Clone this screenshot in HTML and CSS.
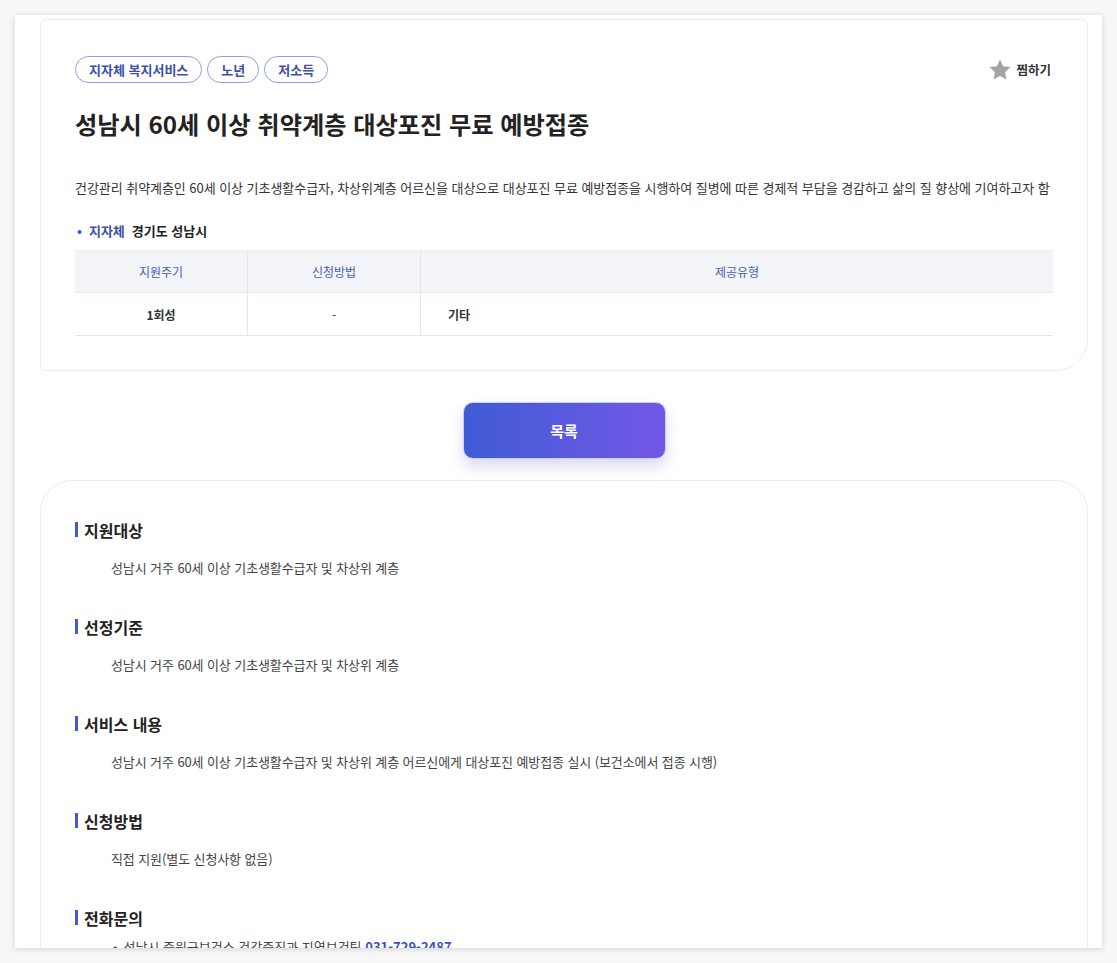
FILE: index.html
```html
<!DOCTYPE html>
<html lang="ko">
<head>
    <meta charset="UTF-8">
    <meta name="viewport" content="width=device-width, initial-scale=1.0">
    <title>성남시 60세 이상 취약계층 대상포진 무료 예방접종</title>
    <link rel="stylesheet" href="styles.css">
</head>
<body>

    <div class="frame">

        <!-- Summary card -->
        <div class="card summary">
            <div class="top-row">
                <div class="tags">
                    <span class="tag">지자체 복지서비스</span>
                    <span class="tag">노년</span>
                    <span class="tag">저소득</span>
                </div>
                <button class="like">
                    <svg width="24" height="24" viewBox="0 0 24 24"><path d="M12 1.5l3.2 6.7 7.3.9-5.4 5.1 1.4 7.3L12 18l-6.5 3.5 1.4-7.3-5.4-5.1 7.3-.9z" fill="#a5a5a5"/></svg>
                    찜하기
                </button>
            </div>

            <h1 class="title">성남시 60세 이상 취약계층 대상포진 무료 예방접종</h1>

            <p class="desc">건강관리 취약계층인 60세 이상 기초생활수급자, 차상위계층 어르신을 대상으로 대상포진 무료 예방접종을 시행하여 질병에 따른 경제적 부담을 경감하고 삶의 질 향상에 기여하고자 함</p>

            <p class="region"><span class="dot">•</span><span class="label">지자체</span>경기도 성남시</p>

            <table class="info">
                <tr>
                    <th class="c1">지원주기</th>
                    <th class="c2">신청방법</th>
                    <th>제공유형</th>
                </tr>
                <tr>
                    <td class="c1">1회성</td>
                    <td class="c2">-</td>
                    <td class="left">기타</td>
                </tr>
            </table>
        </div>

        <div class="btn-wrap">
            <button class="list-btn">목록</button>
        </div>

        <!-- Detail card -->
        <div class="card detail">
            <div class="section">
                <h2>지원대상</h2>
                <p>성남시 거주 60세 이상 기초생활수급자 및 차상위 계층</p>
            </div>
            <div class="section">
                <h2>선정기준</h2>
                <p>성남시 거주 60세 이상 기초생활수급자 및 차상위 계층</p>
            </div>
            <div class="section">
                <h2>서비스 내용</h2>
                <p>성남시 거주 60세 이상 기초생활수급자 및 차상위 계층 어르신에게 대상포진 예방접종 실시 (보건소에서 접종 시행)</p>
            </div>
            <div class="section">
                <h2>신청방법</h2>
                <p>직접 지원(별도 신청사항 없음)</p>
            </div>
            <div class="section">
                <h2>전화문의</h2>
                <ul>
                    <li>성남시 중원구보건소 건강증진과 지역보건팀 <b>031-729-2487</b></li>
                </ul>
            </div>
        </div>

    </div>

</body>
</html>
```

FILE: styles.css
```css
body {
    margin: 0;
    padding: 15px;
    background-color: #f7f7f7;
    font-family: "Noto Sans CJK KR", "Noto Sans", sans-serif;
    color: #222;
}

.frame {
    background: white;
    height: 933px;
    overflow: hidden;
    box-shadow: 0 1px 6px rgba(0, 0, 0, 0.15);
    padding: 4px 14px 0 25px;
    box-sizing: border-box;
}

.card {
    background: white;
    border: 1px solid #ececec;
}

.summary {
    border-radius: 6px 6px 32px 6px;
    padding: 36px 34px 34px 34px;
}

.top-row {
    display: flex;
    justify-content: space-between;
    align-items: center;
}

.tags {
    display: flex;
    gap: 5px;
}

.tag {
    border: 1px solid #8d9de0;
    border-radius: 14px;
    color: #3d4fa6;
    font-size: 13px;
    font-weight: bold;
    height: 25px;
    line-height: 25px;
    padding: 0 13px;
}

.like {
    display: flex;
    align-items: center;
    gap: 4px;
    background: none;
    border: none;
    padding: 0;
    margin-right: 2px;
    font-family: inherit;
    font-size: 12.5px;
    font-weight: bold;
    color: #333;
}

.title {
    font-size: 24.2px;
    font-weight: bold;
    margin: 24px 0 0;
    line-height: 34px;
}

.desc {
    font-size: 13px;
    color: #333;
    margin: 37px 0 0;
    line-height: 20px;
    letter-spacing: -0.05px;
}

.region {
    font-size: 13px;
    font-weight: bold;
    margin: 23px 0 0;
    line-height: 20px;
}

.region .dot {
    color: #3d5bd9;
    margin: 0 7px 0 2px;
}

.region .label {
    color: #3d4fa6;
    margin-right: 7px;
}

.info {
    width: 100%;
    border-collapse: collapse;
    margin-top: 9px;
    font-size: 12px;
}

.info th {
    background: #f2f4f8;
    color: #4d5cbb;
    font-weight: normal;
    height: 41px;
    padding: 0;
    border-top: 1px solid #eceef2;
    border-bottom: 1px solid #e6e8ee;
}

.info td {
    height: 42px;
    padding: 0;
    text-align: center;
    font-weight: bold;
    color: #333;
    border-bottom: 1px solid #e6e6e6;
}

.info .c1, .info .c2 {
    width: 172px;
    border-right: 1px solid #e6e6e6;
}

.info td.c2 {
    font-weight: normal;
}

.info td.left {
    text-align: left;
    padding-left: 27px;
}

.btn-wrap {
    display: flex;
    justify-content: center;
    padding: 31px 0 21px;
}

.list-btn {
    width: 203px;
    height: 57px;
    border: 1px solid #c9d0f5;
    border-radius: 10px;
    background: linear-gradient(90deg, #3f5cd6, #7357e6);
    color: white;
    font-family: inherit;
    font-size: 15px;
    font-weight: bold;
    box-shadow: 0 8px 14px rgba(80, 90, 200, 0.22);
}

.detail {
    border-radius: 32px 32px 0 0;
    padding: 36px 34px 40px;
    min-height: 500px;
}

.section {
    margin-bottom: 41px;
}

.section h2 {
    font-size: 16px;
    font-weight: bold;
    margin: 0;
    line-height: 24px;
    border-left: 3px solid #3d5bd9;
    padding-left: 6px;
    height: 15px;
    display: flex;
    align-items: center;
    margin-top: 5px;
}

.section p {
    font-size: 13px;
    color: #444;
    margin: 21px 0 0 36px;
    line-height: 20px;
    letter-spacing: -0.1px;
}

.section ul {
    margin: 12px 0 0 36px;
    padding: 0;
    list-style: none;
    font-size: 13px;
    color: #444;
    line-height: 20px;
}

.section li::before {
    content: "•";
    margin: 0 6px 0 2px;
}

.section li b {
    color: #3d4fc0;
}
```
